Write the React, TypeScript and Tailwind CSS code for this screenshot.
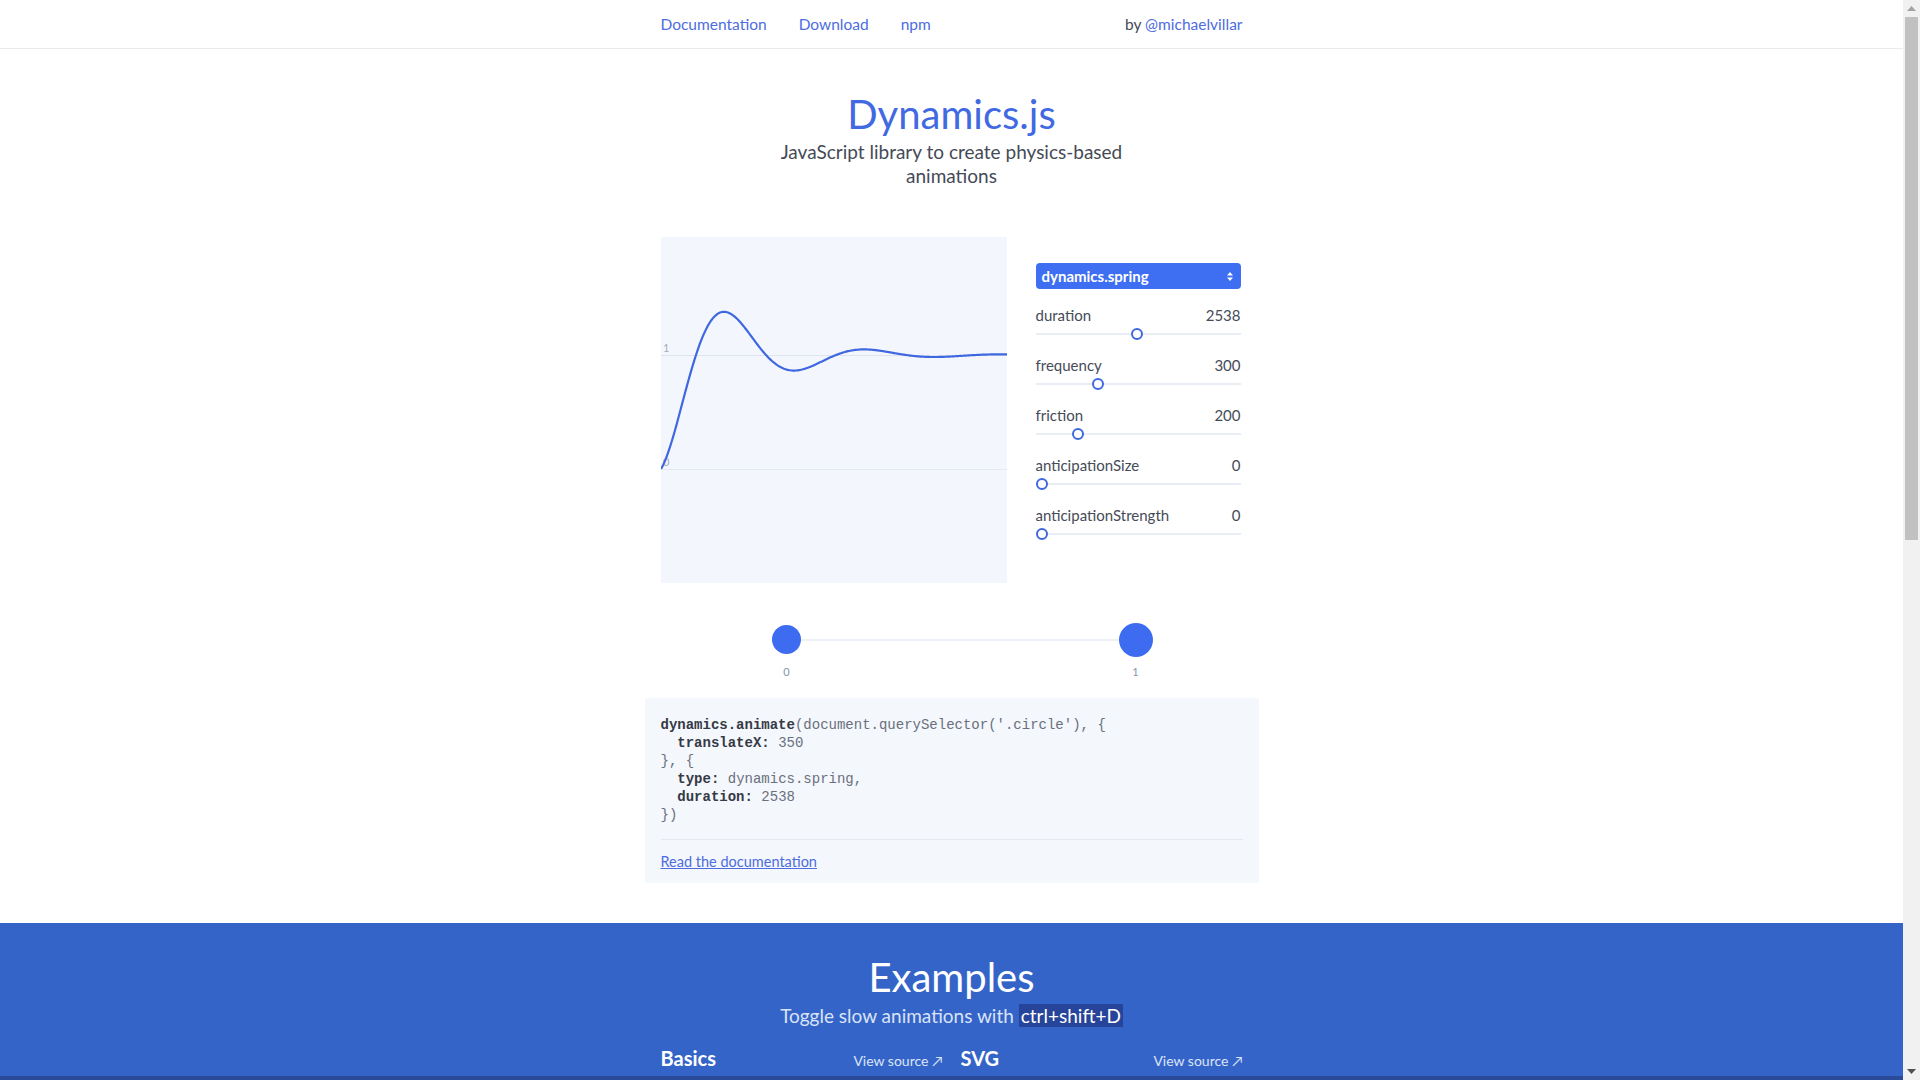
import React from "react";

const FONT = { fontFamily: "Lato, 'Open Sans', sans-serif" };
const MONO = { fontFamily: "'Liberation Mono', 'DejaVu Sans Mono', monospace" };

function springPath() {
  const a = 0.0146;
  const w = Math.PI / 70;
  let d = "";
  for (let x = 0; x <= 346; x += 1) {
    const y = 1 - Math.exp(-a * x) * Math.cos(w * x);
    const py = 232 - 114 * y;
    d += (x === 0 ? "M" : "L") + x + " " + py.toFixed(2) + " ";
  }
  return d;
}

const sliders = [
  { name: "duration", value: "2538", p: 0.497 },
  { name: "frequency", value: "300", p: 0.295 },
  { name: "friction", value: "200", p: 0.19 },
  { name: "anticipationSize", value: "0", p: 0 },
  { name: "anticipationStrength", value: "0", p: 0 },
];

function Slider({ name, value, p }: { name: string; value: string; p: number }) {
  return (
    <div className="h-[50px]">
      <div className="flex justify-between text-[15px] leading-[20px] text-[#464b58]">
        <span>{name}</span>
        <span>{value}</span>
      </div>
      <div className="relative mt-[3px] h-[12px]">
        <div className="absolute left-0 right-0 top-[5px] h-[2px] bg-[#e8edf6]" />
        <div
          className="absolute top-0 h-[12px] w-[12px] rounded-full border-2 border-[#3f68e0] bg-white"
          style={{ left: `${p * 193}px` }}
        />
      </div>
    </div>
  );
}

function Chart() {
  return (
    <div className="relative h-[346px] w-[346px] bg-[#f3f7fd]">
      <svg width="346" height="346" viewBox="0 0 346 346" className="absolute left-0 top-0">
        <line x1="0" y1="118.5" x2="346" y2="118.5" stroke="#dde4ef" strokeWidth="1" />
        <line x1="0" y1="232.5" x2="346" y2="232.5" stroke="#e4eaf3" strokeWidth="1" />
        <text x="2" y="115" fontSize="11" fill="#a3abba" style={FONT}>1</text>
        <text x="2" y="229" fontSize="11" fill="#a3abba" style={FONT}>0</text>
        <path d={springPath()} fill="none" stroke="#3f68e0" strokeWidth="2.2" strokeLinejoin="round" />
      </svg>
    </div>
  );
}

function Scrollbar() {
  return (
    <div className="relative h-full w-[17px] shrink-0 bg-[#f1f1f1]">
      <div className="flex h-[17px] items-center justify-center">
        <svg width="9" height="5" viewBox="0 0 9 5"><path d="M0 5 L4.5 0 L9 5 Z" fill="#a3a3a3" /></svg>
      </div>
      <div className="mx-[2px] h-[523px] bg-[#c1c1c1]" />
      <div className="absolute bottom-0 left-0 flex h-[17px] w-[17px] items-center justify-center">
        <svg width="9" height="5" viewBox="0 0 9 5"><path d="M0 0 L4.5 5 L9 0 Z" fill="#505050" /></svg>
      </div>
    </div>
  );
}

export default function App() {
  return (
    <div className="flex h-[1080px] w-[1920px] overflow-hidden bg-white" style={FONT}>
      <div className="flex h-full min-w-0 flex-1 flex-col overflow-hidden">
        {/* nav */}
        <nav className="h-[49px] shrink-0 border-b border-[#e9ebef]">
          <div className="mx-auto flex h-[48px] w-[582px] items-center justify-between pt-[2px] text-[15.5px]">
            <div className="flex gap-[32px] text-[#4d6ddf]">
              <span>Documentation</span>
              <span>Download</span>
              <span>npm</span>
            </div>
            <div className="text-[#454a57]">
              by <span className="text-[#4d6ddf]">@michaelvillar</span>
            </div>
          </div>
        </nav>

        {/* header */}
        <div className="mx-auto mt-[41px] w-[582px] text-center">
          <h1 className="text-[40px] leading-[48px] text-[#4169e1]">Dynamics.js</h1>
          <p className="mx-auto mt-[2px] w-[350px] text-[19px] leading-[24px] text-[#454a57]">
            JavaScript library to create physics-based animations
          </p>
        </div>

        {/* demo */}
        <div className="mx-auto mt-[49px] flex w-[582px] gap-[29px]">
          <Chart />
          <div className="w-[205px] pt-[26px]">
            <div className="flex h-[26px] items-center justify-between rounded-[4px] bg-[#3e6ef1] pl-[6px] pr-[8px] text-[15px] font-bold text-white">
              <span>dynamics.spring</span>
              <svg width="6" height="9" viewBox="0 0 6 9">
                <path d="M0 3.5 L3 0 L6 3.5 Z M0 5.5 L3 9 L6 5.5 Z" fill="#ffffff" />
              </svg>
            </div>
            <div className="mt-[16px]">
              {sliders.map((s) => (
                <Slider key={s.name} {...s} />
              ))}
            </div>
          </div>
        </div>

        {/* circles */}
        <div className="mx-auto mt-[40px] w-[582px]">
          <div className="relative h-[34px]">
            <div className="absolute left-[125px] top-[16px] h-[2px] w-[350px] bg-[#edf1f8]" />
            <div className="absolute left-[111px] top-[2px] h-[29px] w-[29px] rounded-full bg-[#3d6cf0]" />
            <div className="absolute left-[458px] top-0 h-[34px] w-[34px] rounded-full bg-[#3d6cf0]" />
          </div>
          <div className="relative mt-[8px] h-[14px] text-[11px] leading-[14px] text-[#8a93a6]">
            <span className="absolute left-[116px] w-[20px] text-center">0</span>
            <span className="absolute left-[465px] w-[20px] text-center">1</span>
          </div>
        </div>

        {/* code */}
        <div className="mx-auto mt-[19px] w-[614px] bg-[#f4f7fc] px-[16px] pb-[10px] pt-[18px]">
          <pre className="text-[14px] leading-[18px] text-[#6a7080]" style={MONO}>
            <span className="font-bold text-[#353a46]">dynamics.animate</span>(document.querySelector('.circle'), {"{"}
            {"\n  "}<span className="font-bold text-[#353a46]">translateX:</span> 350
            {"\n"}{"}"}, {"{"}
            {"\n  "}<span className="font-bold text-[#353a46]">type:</span> dynamics.spring,
            {"\n  "}<span className="font-bold text-[#353a46]">duration:</span> 2538
            {"\n"}{"})"}
          </pre>
          <div className="mt-[15px] border-t border-[#e3e8f0] pt-[9px]">
            <span className="text-[14.5px] leading-[18px] text-[#4d6ddf] underline">Read the documentation</span>
          </div>
        </div>

        {/* examples */}
        <div className="mt-[40px] flex-1 bg-[#3564c8]">
          <div className="mx-auto w-[582px] pt-[30px] text-center">
            <h2 className="text-[40px] leading-[48px] text-white">Examples</h2>
            <p className="mt-[2px] text-[19px] leading-[26px] text-[#d9e3f8]">
              Toggle slow animations with{" "}
              <span className="bg-[#25449a] px-[2px] text-white">ctrl+shift+D</span>
            </p>
            <div className="mt-[14px] grid grid-cols-2 gap-[18px]">
              <div className="flex items-baseline justify-between">
                <span className="text-[20px] font-bold text-white">Basics</span>
                <span className="text-[14px] text-[#dbe4f8]">View source ↗</span>
              </div>
              <div className="flex items-baseline justify-between">
                <span className="text-[20px] font-bold text-white">SVG</span>
                <span className="text-[14px] text-[#dbe4f8]">View source ↗</span>
              </div>
            </div>
          </div>
        </div>
        <div className="h-[4px] shrink-0 bg-[#2a4b99]" />
      </div>
      <Scrollbar />
    </div>
  );
}
